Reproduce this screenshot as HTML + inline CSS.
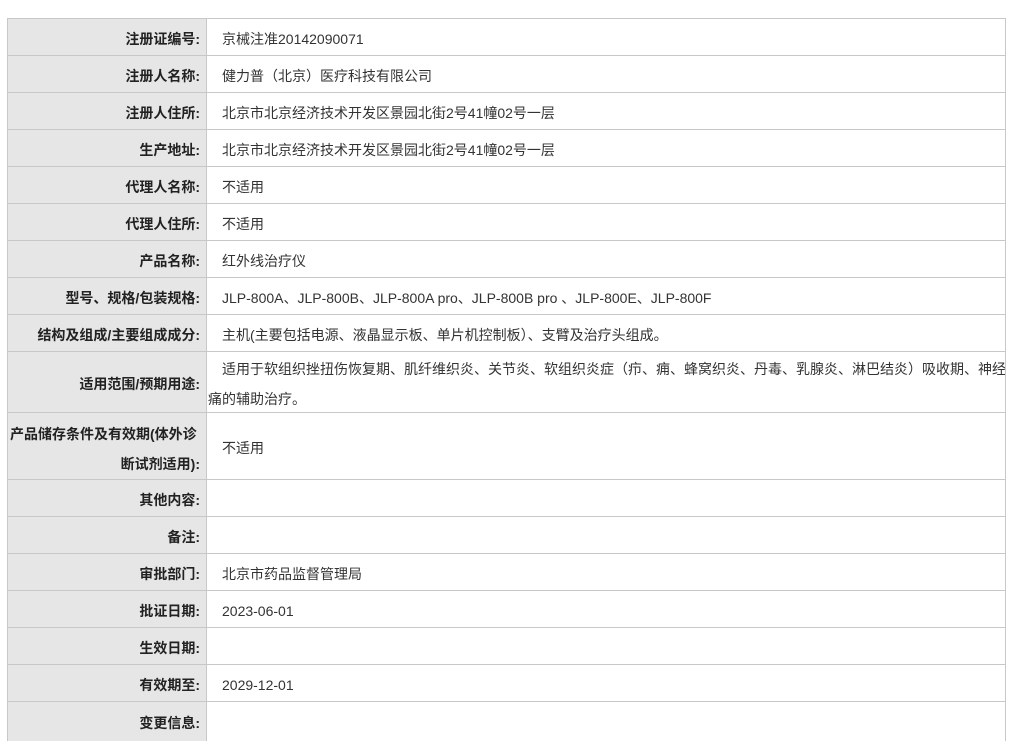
<!DOCTYPE html>
<html><head><meta charset="utf-8"><style>
body{margin:0;width:1009px;height:736px;overflow:hidden;background:#fff;font-family:"Liberation Sans","Noto Sans CJK SC",sans-serif;font-size:14px;color:#333}
.r{position:absolute;left:7px;width:999px;border-top:1px solid #c8c8c8;border-left:1px solid #c8c8c8;border-right:1px solid #c8c8c8;box-sizing:border-box}
.l{position:absolute;left:0;top:0;bottom:0;width:199px;background:#e6e6e6;border-right:1px solid #c8c8c8;font-weight:bold;color:#222;text-align:right;padding-right:6px;padding-top:4px;box-sizing:border-box;display:flex;align-items:center;justify-content:flex-end;line-height:30px;white-space:nowrap}
.v{position:absolute;left:200px;right:0;top:0;bottom:0;display:flex;align-items:center;padding-left:14px;padding-top:3px;white-space:nowrap;line-height:30px;box-sizing:border-box}
</style></head><body>
<div class="r" style="top:18px;height:37px"><div class="l">注册证编号:</div><div class="v">京械注准20142090071</div></div>
<div class="r" style="top:55px;height:37px"><div class="l">注册人名称:</div><div class="v">健力普（北京）医疗科技有限公司</div></div>
<div class="r" style="top:92px;height:37px"><div class="l">注册人住所:</div><div class="v">北京市北京经济技术开发区景园北街2号41幢02号一层</div></div>
<div class="r" style="top:129px;height:37px"><div class="l">生产地址:</div><div class="v">北京市北京经济技术开发区景园北街2号41幢02号一层</div></div>
<div class="r" style="top:166px;height:37px"><div class="l">代理人名称:</div><div class="v">不适用</div></div>
<div class="r" style="top:203px;height:37px"><div class="l">代理人住所:</div><div class="v">不适用</div></div>
<div class="r" style="top:240px;height:37px"><div class="l">产品名称:</div><div class="v">红外线治疗仪</div></div>
<div class="r" style="top:277px;height:37px"><div class="l">型号、规格/包装规格:</div><div class="v">JLP-800A、JLP-800B、JLP-800A pro、JLP-800B pro 、JLP-800E、JLP-800F</div></div>
<div class="r" style="top:314px;height:37px"><div class="l">结构及组成/主要组成成分:</div><div class="v">主机(主要包括电源、液晶显示板、单片机控制板）、支臂及治疗头组成。</div></div>
<div class="r" style="top:351px;height:61px"><div class="l">适用范围/预期用途:</div><div class="v" style="padding-left:0;display:block;padding-top:2px;overflow:hidden"><div style="padding-left:14px">适用于软组织挫扭伤恢复期、肌纤维织炎、关节炎、软组织炎症（疖、痈、蜂窝织炎、丹毒、乳腺炎、淋巴结炎）吸收期、神经</div><div>痛的辅助治疗。</div></div></div>
<div class="r" style="top:412px;height:67px"><div class="l" style="display:block;padding-top:6px;padding-right:6px"><div style="text-align:left;padding-left:2px">产品储存条件及有效期(体外诊</div><div>断试剂适用):</div></div><div class="v">不适用</div></div>
<div class="r" style="top:479px;height:37px"><div class="l">其他内容:</div><div class="v"></div></div>
<div class="r" style="top:516px;height:37px"><div class="l">备注:</div><div class="v"></div></div>
<div class="r" style="top:553px;height:37px"><div class="l">审批部门:</div><div class="v">北京市药品监督管理局</div></div>
<div class="r" style="top:590px;height:37px"><div class="l">批证日期:</div><div class="v">2023-06-01</div></div>
<div class="r" style="top:627px;height:37px"><div class="l">生效日期:</div><div class="v"></div></div>
<div class="r" style="top:664px;height:37px"><div class="l">有效期至:</div><div class="v">2029-12-01</div></div>
<div class="r" style="top:701px;height:40px"><div class="l" style="align-items:flex-start;padding-top:6px">变更信息:</div><div class="v"></div></div>
</body></html>
